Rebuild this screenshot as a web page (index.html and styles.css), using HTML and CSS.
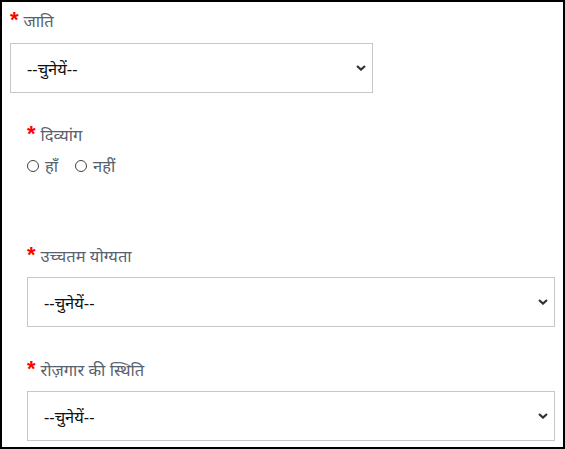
FILE: index.html
```html
<!DOCTYPE html>
<html lang="hi">
<head>
<meta charset="utf-8">
<title>फ़ॉर्म</title>
<link rel="stylesheet" href="styles.css">
</head>
<body>
<div class="form">
  <div class="group first">
    <div class="label"><span class="req">*</span>जाति</div>
    <div class="select-wrap narrow">
      <select class="select"><option>--चुनेयें--</option></select>
      <svg class="chev" width="10" height="6" viewBox="0 0 10 6"><path d="M1 1 L5 4.6 L9 1" fill="none" stroke="#333" stroke-width="2.2"/></svg>
    </div>
  </div>

  <div class="group g2">
    <div class="label"><span class="req">*</span>दिव्यांग</div>
    <div class="radios">
      <label class="radio"><input type="radio" name="dv">हाँ</label>
      <label class="radio"><input type="radio" name="dv">नहीं</label>
    </div>
  </div>

  <div class="group g3">
    <div class="label"><span class="req">*</span>उच्चतम योग्यता</div>
    <div class="select-wrap">
      <select class="select"><option>--चुनेयें--</option></select>
      <svg class="chev" width="10" height="6" viewBox="0 0 10 6"><path d="M1 1 L5 4.6 L9 1" fill="none" stroke="#333" stroke-width="2.2"/></svg>
    </div>
  </div>

  <div class="group g4">
    <div class="label"><span class="req">*</span>रोज़गार की स्थिति</div>
    <div class="select-wrap">
      <select class="select"><option>--चुनेयें--</option></select>
      <svg class="chev" width="10" height="6" viewBox="0 0 10 6"><path d="M1 1 L5 4.6 L9 1" fill="none" stroke="#333" stroke-width="2.2"/></svg>
    </div>
  </div>
</div>
</body>
</html>
```

FILE: styles.css
```css
html, body {
  margin: 0;
  padding: 0;
  background: #fff;
}
.form {
  box-sizing: border-box;
  width: 565px;
  height: 449px;
  border: 2px solid #000;
  padding: 6px 8px 0 8px;
  font-family: "Noto Sans", "Noto Sans Devanagari", sans-serif;
  font-size: 16.5px;
  color: #58626e;
  overflow: hidden;
}
.group {
  display: flex;
  flex-direction: column;
}
.group.g2, .group.g3, .group.g4 {
  margin-left: 17px;
}
.g2 { margin-top: 29px; }
.g3 { margin-top: 65px; }
.g4 { margin-top: 30px; }
.label {
  display: flex;
  align-items: baseline;
  height: 24px;
  line-height: 24px;
}
.req {
  color: #f00;
  font-family: "Liberation Sans", Arial, sans-serif;
  font-weight: bold;
  font-size: 22px;
  margin-right: 5px;
}
.select-wrap {
  position: relative;
  margin-top: 11px;
  width: 100%;
}
.g3 .select-wrap, .g4 .select-wrap { margin-top: 10px; }
.select-wrap.narrow { width: 363px; }
.select {
  display: block;
  box-sizing: border-box;
  width: 100%;
  height: 50px;
  margin: 0;
  border: 1px solid #c4c8cc;
  border-radius: 0;
  background: #fff;
  -webkit-appearance: none;
  appearance: none;
  padding: 0 30px 0 16px;
  font-family: "Noto Sans", "Noto Sans Devanagari", sans-serif;
  font-size: 16.5px;
  color: #111;
  outline: none;
}
.chev {
  position: absolute;
  right: 7px;
  top: 22px;
  pointer-events: none;
}
.radios {
  display: flex;
  gap: 17px;
  margin-top: 8px;
  height: 24px;
  align-items: center;
}
.radio {
  display: flex;
  align-items: center;
  gap: 6px;
  line-height: 24px;
}
.radio input {
  -webkit-appearance: none;
  appearance: none;
  width: 12px;
  height: 12px;
  margin: 0;
  border: 1px solid #444;
  border-radius: 50%;
  background: #fff;
}
```
